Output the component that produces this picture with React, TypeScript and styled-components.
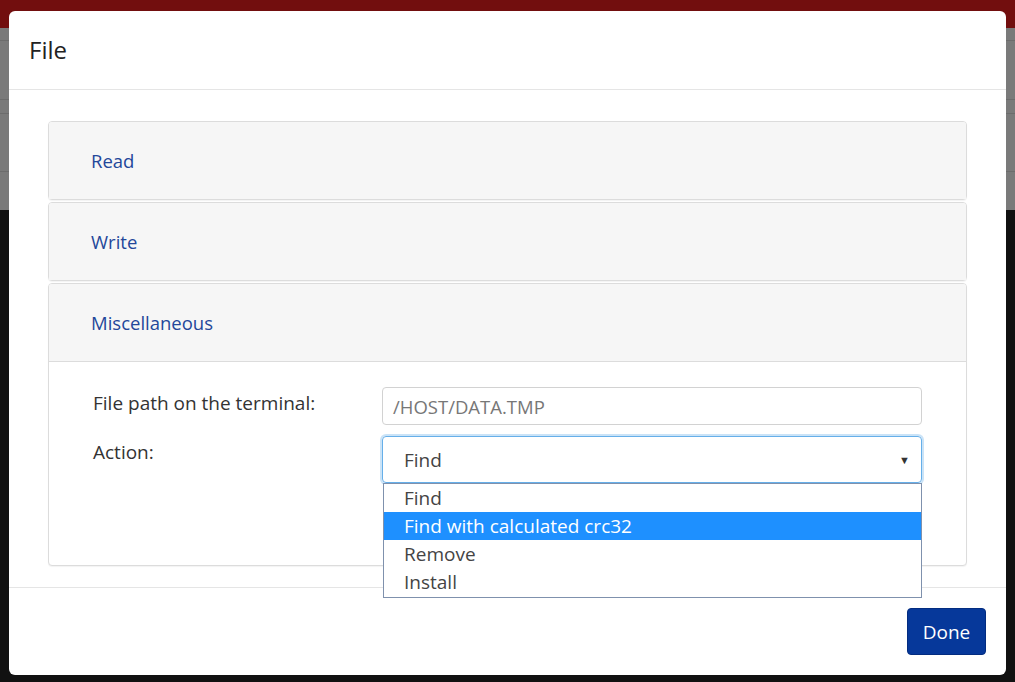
import React from "react";
import styled, { createGlobalStyle } from "styled-components";

const Global = createGlobalStyle`
  html, body { margin: 0; padding: 0; }
  body {
    background: #111111;
    font-family: "Open Sans", "Noto Sans", sans-serif;
    width: 1015px;
    height: 682px;
    overflow: hidden;
  }
  * { box-sizing: border-box; }
`;

const Page = styled.div`
  position: relative;
  width: 1015px;
  height: 682px;
  background: #111111;
  overflow: hidden;
`;

const TopBar = styled.div`
  height: 28px;
  background: #720e0e;
`;

const GreyArea = styled.div`
  height: 182px;
  background: #7a7a7a;
  display: flex;
  flex-direction: column;
`;

const GreyLine = styled.div<{ $gap: number }>`
  margin-top: ${(p) => p.$gap}px;
  height: 1px;
  background: #6c6c6c;
`;

const Modal = styled.div`
  position: absolute;
  left: 9px;
  top: 11px;
  width: 997px;
  height: 664px;
  background: #fff;
  border-radius: 6px;
  display: flex;
  flex-direction: column;
`;

const Header = styled.div`
  height: 79px;
  padding: 0 20px;
  display: flex;
  align-items: center;
  border-bottom: 1px solid #e5e5e5;
`;

const Title = styled.h4`
  margin: 0;
  font-size: 24px;
  font-weight: 400;
  color: #222;
  padding-bottom: 2px;
`;

const Body = styled.div`
  padding: 31px 39px 21px;
  display: flex;
  flex-direction: column;
  gap: 2px;
  border-bottom: 1px solid #e5e5e5;
`;

const Panel = styled.div`
  border: 1px solid #dcdcdc;
  border-radius: 4px;
  background: #fff;
  box-shadow: 0 1px 1px rgba(0, 0, 0, 0.05);
`;

const PanelHeading = styled.div<{ $open?: boolean }>`
  height: ${(p) => (p.$open ? 78 : 77)}px;
  padding: 0 42px;
  display: flex;
  align-items: center;
  background: #f6f6f6;
  border-radius: 3px 3px 0 0;
  border-bottom: ${(p) => (p.$open ? "1px solid #dcdcdc" : "none")};
`;

const PanelTitle = styled.span`
  font-size: 18.5px;
  color: #23479a;
`;

const PanelBody = styled.div`
  padding: 25px 44px 82px 44px;
  display: flex;
  flex-direction: column;
  gap: 11px;
`;

const FormRow = styled.div`
  display: grid;
  grid-template-columns: 289px 1fr;
  align-items: start;
`;

const Label = styled.label`
  font-size: 19px;
  color: #333;
  padding-top: 3px;
`;

const TextInput = styled.div`
  height: 38px;
  border: 1px solid #d2d2d2;
  border-radius: 4px;
  padding: 0 10px;
  display: flex;
  align-items: center;
  font-size: 18.5px;
  color: #777;
`;

const SelectWrap = styled.div`
  position: relative;
`;

const Select = styled.div`
  height: 47px;
  border: 1px solid #66afe9;
  border-radius: 4px;
  box-shadow: 0 0 0 2px rgba(102, 175, 233, 0.35);
  padding: 0 21px;
  display: flex;
  align-items: center;
  justify-content: space-between;
  font-size: 19px;
  color: #444;
`;

const Caret = styled.span`
  font-size: 11px;
  color: #333;
  margin-right: -10px;
`;

const Dropdown = styled.ul`
  position: absolute;
  left: 1px;
  right: 0;
  top: 47px;
  margin: 0;
  padding: 0 0 1px;
  list-style: none;
  background: #fff;
  border: 1px solid #7f91ad;
  z-index: 2;
`;

const Option = styled.li<{ $active?: boolean }>`
  height: 28px;
  line-height: 28px;
  padding: 0 20px;
  font-size: 19px;
  color: ${(p) => (p.$active ? "#fff" : "#444")};
  background: ${(p) => (p.$active ? "#1e90ff" : "transparent")};
`;

const Footer = styled.div`
  flex: 1;
  display: flex;
  justify-content: flex-end;
  align-items: flex-start;
  padding: 20px 20px;
`;

const DoneButton = styled.button`
  width: 79px;
  height: 47px;
  background: #06389a;
  border: 1px solid #032c80;
  border-radius: 4px;
  color: #fff;
  font-family: inherit;
  font-size: 19px;
  cursor: pointer;
`;

export default function App() {
  return (
    <Page>
      <Global />
      <TopBar />
      <GreyArea>
        <GreyLine $gap={12} />
        <GreyLine $gap={58} />
        <GreyLine $gap={13} />
        <GreyLine $gap={57} />
      </GreyArea>
      <Modal>
        <Header>
          <Title>File</Title>
        </Header>
        <Body>
          <Panel>
            <PanelHeading>
              <PanelTitle>Read</PanelTitle>
            </PanelHeading>
          </Panel>
          <Panel>
            <PanelHeading>
              <PanelTitle>Write</PanelTitle>
            </PanelHeading>
          </Panel>
          <Panel>
            <PanelHeading $open>
              <PanelTitle>Miscellaneous</PanelTitle>
            </PanelHeading>
            <PanelBody>
              <FormRow>
                <Label>File path on the terminal:</Label>
                <TextInput>/HOST/DATA.TMP</TextInput>
              </FormRow>
              <FormRow>
                <Label>Action:</Label>
                <SelectWrap>
                  <Select>
                    <span>Find</span>
                    <Caret>▼</Caret>
                  </Select>
                  <Dropdown>
                    <Option>Find</Option>
                    <Option $active>Find with calculated crc32</Option>
                    <Option>Remove</Option>
                    <Option>Install</Option>
                  </Dropdown>
                </SelectWrap>
              </FormRow>
            </PanelBody>
          </Panel>
        </Body>
        <Footer>
          <DoneButton>Done</DoneButton>
        </Footer>
      </Modal>
    </Page>
  );
}
